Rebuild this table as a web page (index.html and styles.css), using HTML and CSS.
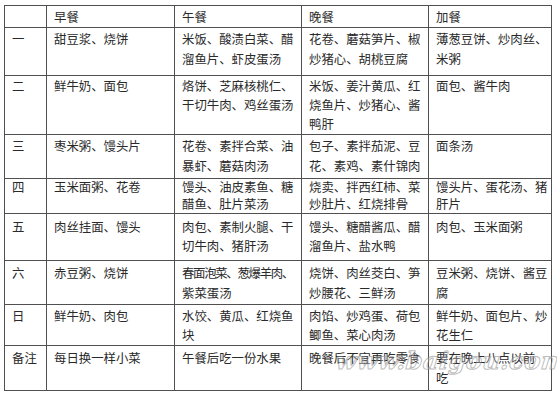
FILE: index.html
```html
<!DOCTYPE html>
<html lang="zh">
<head>
<meta charset="utf-8">
<link rel="stylesheet" href="styles.css">
</head>
<body>
<div class="wrap">
<table class="menu">
  <colgroup>
    <col class="c-day"><col class="c-meal"><col class="c-lunch"><col class="c-dinner"><col class="c-extra">
  </colgroup>
  <tr class="r-head"><td></td><td>早餐</td><td>午餐</td><td>晚餐</td><td>加餐</td></tr>
  <tr class="r1"><td>一</td><td>甜豆浆、烧饼</td><td>米饭、酸渍白菜、醋<br>溜鱼片、虾皮蛋汤</td><td>花卷、蘑菇笋片、椒<br>炒猪心、胡桃豆腐</td><td>薄葱豆饼、炒肉丝、<br>米粥</td></tr>
  <tr class="r2"><td>二</td><td>鲜牛奶、面包</td><td>烙饼、芝麻核桃仁、<br>干切牛肉、鸡丝蛋汤</td><td>米饭、姜汁黄瓜、红<br>烧鱼片、炒猪心、酱<br>鸭肝</td><td>面包、酱牛肉</td></tr>
  <tr class="r3"><td>三</td><td>枣米粥、馒头片</td><td>花卷、素拌合菜、油<br>暴虾、蘑菇肉汤</td><td>包子、素拌茄泥、豆<br>花、素鸡、素什锦肉</td><td>面条汤</td></tr>
  <tr class="r4"><td>四</td><td>玉米面粥、花卷</td><td>馒头、油皮素鱼、糖<br>醋鱼、肚片菜汤</td><td>烧卖、拌西红柿、菜<br>炒肚片、红烧排骨</td><td>馒头片、蛋花汤、猪<br>肝片</td></tr>
  <tr class="r5"><td>五</td><td>肉丝挂面、馒头</td><td>肉包、素制火腿、干<br>切牛肉、猪肝汤</td><td>馒头、糖醋酱瓜、醋<br>溜鱼片、盐水鸭</td><td>肉包、玉米面粥</td></tr>
  <tr class="r6"><td>六</td><td>赤豆粥、烧饼</td><td><span class="tight">春面泡菜、葱爆羊肉、</span><br>紫菜蛋汤</td><td>烧饼、肉丝茭白、笋<br>炒腰花、三鲜汤</td><td>豆米粥、烧饼、酱豆<br>腐</td></tr>
  <tr class="r7"><td>日</td><td>鲜牛奶、肉包</td><td>水饺、黄瓜、红烧鱼<br>块</td><td>肉馅、炒鸡蛋、荷包<br>鲫鱼、菜心肉汤</td><td>鲜牛奶、面包片、炒<br>花生仁</td></tr>
  <tr class="r8"><td>备注</td><td>每日换一样小菜</td><td>午餐后吃一份水果</td><td>晚餐后不宜再吃零食</td><td>要在晚上八点以前<br>吃</td></tr>
</table>
<span class="watermark">www.baigou.com</span>
</div>
</body>
</html>
```

FILE: styles.css
```css
html, body {
  margin: 0;
  padding: 0;
  background: #ffffff;
}

.wrap {
  position: relative;
  width: 557px;
  height: 400px;
  overflow: hidden;
}

.menu {
  margin: 5px 0 0 4px;
  border-collapse: collapse;
  table-layout: fixed;
  width: 547px;
  font-family: "Noto Sans CJK SC", "Noto Sans", sans-serif;
  font-size: 12.4px;
  line-height: 18px;
  color: #2a2a2a;
}

.c-day { width: 42px; }
.c-meal { width: 128px; }
.c-lunch { width: 127px; }
.c-dinner { width: 127px; }
.c-extra { width: 123px; }

.menu td {
  border: 1px solid #505050;
  vertical-align: top;
  padding: 2px 4px 0 7px;
  white-space: nowrap;
}

.tight { letter-spacing: -1.3px; }

.r-head td { height: 19px; }
.r1 td { height: 46px; line-height: 20px; padding-top: 1px; }
.r2 td { height: 57px; line-height: 19px; padding-top: 1px; }
.r3 td { height: 42px; line-height: 20px; padding-top: 1px; }
.r4 td { height: 34px; padding-top: 0; line-height: 17px; }
.r5 td { height: 42px; padding-top: 4px; line-height: 19px; }
.r6 td { height: 41px; line-height: 20px; }
.r7 td { height: 37px; line-height: 19px; }
.r8 td { height: 42px; line-height: 20px; }

.watermark {
  position: absolute;
  left: 336px;
  top: 347px;
  font-family: "DejaVu Serif", serif;
  font-style: italic;
  font-weight: bold;
  font-size: 24px;
  line-height: 28px;
  letter-spacing: 0.5px;
  color: rgba(255, 255, 255, 0.3);
  -webkit-text-stroke: 1px rgba(120, 120, 120, 0.5);
  transform: skewX(-6deg);
}
```
